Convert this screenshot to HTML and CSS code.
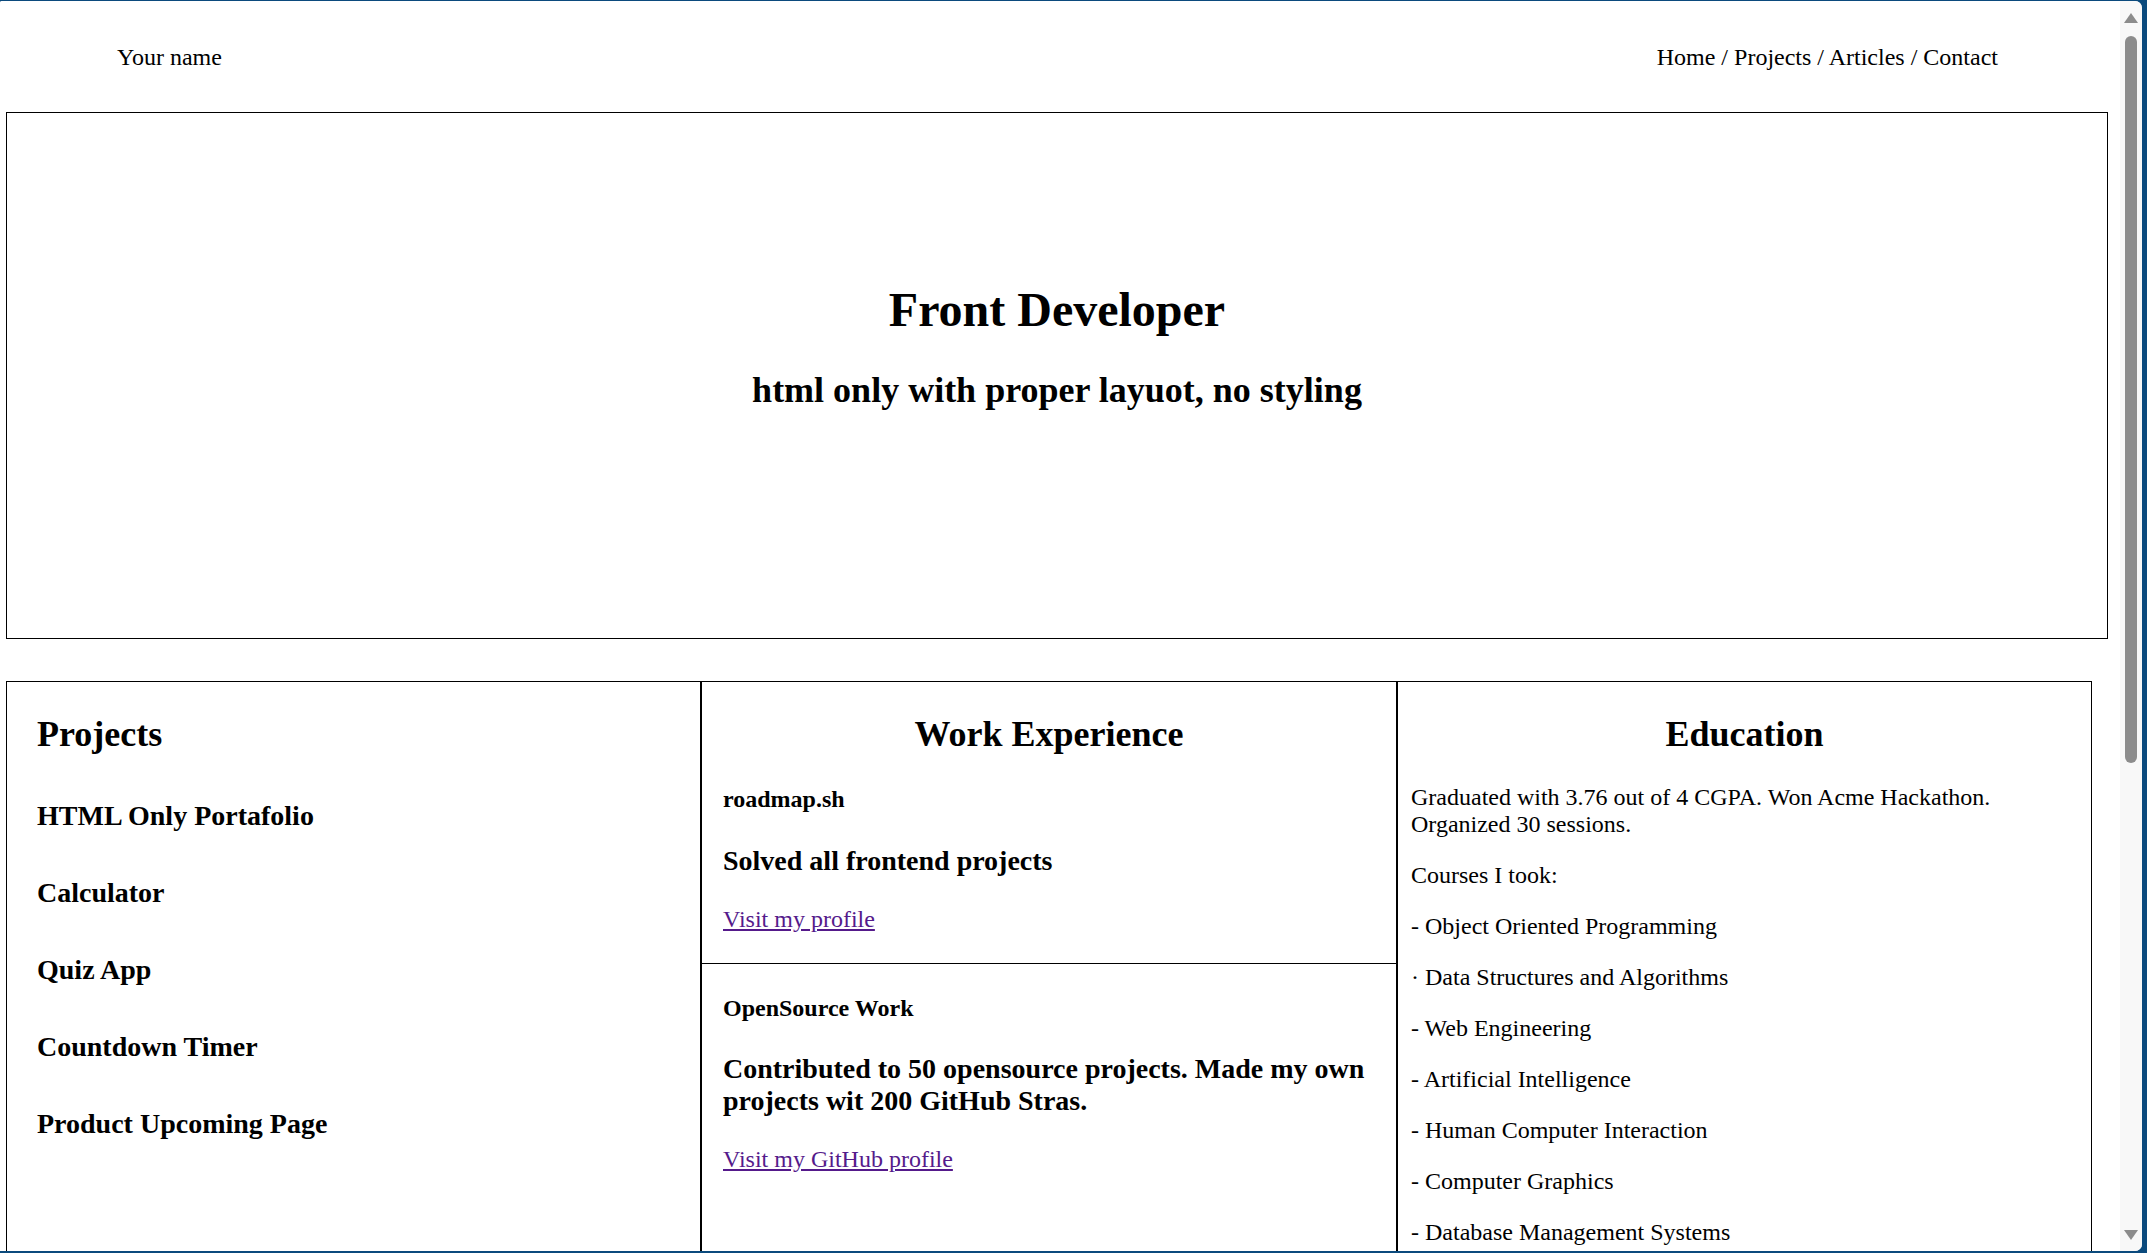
FILE: index.html
```html
<!DOCTYPE html>
<html lang="en">
<head>
<meta charset="utf-8">
<title>Your name</title>
<link rel="stylesheet" href="styles.css">
</head>
<body>
<div class="window">
  <div class="page">
    <header class="site-header">
      <div class="brand">Your name</div>
      <nav class="nav">Home / Projects / Articles / Contact</nav>
    </header>

    <section class="hero">
      <h1 class="hero-title">Front Developer</h1>
      <h2 class="hero-sub">html only with proper layuot, no styling</h2>
    </section>

    <main class="cols">
      <section class="col col-projects">
        <h2 class="col-title">Projects</h2>
        <h3 class="project">HTML Only Portafolio</h3>
        <h3 class="project">Calculator</h3>
        <h3 class="project">Quiz App</h3>
        <h3 class="project">Countdown Timer</h3>
        <h3 class="project">Product Upcoming Page</h3>
      </section>

      <section class="col col-work">
        <h2 class="col-title center">Work Experience</h2>
        <article class="job job-first">
          <h4 class="job-org">roadmap.sh</h4>
          <h3 class="job-desc">Solved all frontend projects</h3>
          <p class="job-link"><a href="#">Visit my profile</a></p>
        </article>
        <article class="job job-second">
          <h4 class="job-org">OpenSource Work</h4>
          <h3 class="job-desc">Contributed to 50 opensource projects. Made my own projects wit 200 GitHub Stras.</h3>
          <p class="job-link"><a href="#">Visit my GitHub profile</a></p>
        </article>
      </section>

      <section class="col col-edu">
        <h2 class="col-title center">Education</h2>
        <p class="edu-text edu-first">Graduated with 3.76 out of 4 CGPA. Won Acme Hackathon. Organized 30 sessions.</p>
        <p class="edu-text">Courses I took:</p>
        <p class="edu-text">- Object Oriented Programming</p>
        <p class="edu-text">· Data Structures and Algorithms</p>
        <p class="edu-text">- Web Engineering</p>
        <p class="edu-text">- Artificial Intelligence</p>
        <p class="edu-text">- Human Computer Interaction</p>
        <p class="edu-text">- Computer Graphics</p>
        <p class="edu-text">- Database Management Systems</p>
      </section>
    </main>
  </div>

  <div class="scrollbar">
    <div class="sb-up"></div>
    <div class="sb-thumb"></div>
    <div class="sb-down"></div>
  </div>
</div>
</body>
</html>
```

FILE: styles.css
```css
html, body {
  margin: 0;
  padding: 0;
}

body {
  background: #0b4a7d;
  height: 1253px;
  overflow: hidden;
  font-family: "Liberation Serif", "Times New Roman", serif;
  color: #000;
}

.window {
  margin-top: 1px;
  width: 2142px;
  height: 1250px;
  display: flex;
  background: #fff;
  border-radius: 2px 7px 7px 0;
  overflow: hidden;
}

.page {
  flex: 1;
  min-width: 0;
  overflow: hidden;
  background: #fff;
}

/* header */
.site-header {
  box-sizing: border-box;
  height: 111px;
  padding: 41.5px 122px 0 117px;
  display: flex;
  justify-content: space-between;
  align-items: flex-start;
  font-size: 24px;
  line-height: 28px;
}

/* hero */
.hero {
  box-sizing: border-box;
  margin-left: 6px;
  width: 2102px;
  height: 527px;
  border: 1px solid #000;
  padding-top: 168.5px;
  text-align: center;
}

.hero-title {
  margin: 0;
  font-size: 48px;
  line-height: 55px;
  font-weight: bold;
}

.hero-sub {
  margin: 33.5px 0 0;
  font-size: 36px;
  line-height: 41px;
  font-weight: bold;
}

/* columns */
.cols {
  display: flex;
  align-items: stretch;
  margin: 42px 0 0 6px;
}

.col {
  box-sizing: border-box;
  border: 1px solid #000;
}

.col-projects {
  width: 695px;
  padding: 0 20px 0 30px;
}

.col-work {
  width: 696px;
}

.col-edu {
  width: 695px;
  padding: 0 13px 60px 13px;
}

.col-title {
  margin: 31.5px 0 0;
  font-size: 36px;
  line-height: 41px;
  font-weight: bold;
}

.center {
  text-align: center;
}

.project {
  margin: 45px 0 0;
  font-size: 28px;
  line-height: 32px;
  font-weight: bold;
}

/* work */
.job {
  padding: 0 21px 0 21px;
}

.job-first {
  padding-bottom: 30.5px;
  border-bottom: 1px solid #000;
}

.job-org {
  margin: 29.5px 0 0;
  font-size: 24px;
  line-height: 28px;
  font-weight: bold;
}

.job-first .job-org {
  margin-top: 30.5px;
}

.job-desc {
  margin: 31.5px 0 0;
  font-size: 28px;
  line-height: 32px;
  font-weight: bold;
}

.job-link {
  margin: 28px 0 0;
  font-size: 24px;
  line-height: 28px;
}

.job-link a {
  color: #551a8b;
  text-decoration: underline;
}

/* education */
.edu-text {
  margin: 24px 0 0;
  font-size: 24px;
  line-height: 27px;
}

.edu-first {
  margin-top: 29.5px;
}

/* fake scrollbar */
.scrollbar {
  width: 22px;
  flex: none;
  background: #f8f8f8;
  display: flex;
  flex-direction: column;
  align-items: center;
  padding: 12px 0 11px;
  box-sizing: border-box;
}

.sb-up {
  width: 0;
  height: 0;
  border-left: 7px solid transparent;
  border-right: 7px solid transparent;
  border-bottom: 10px solid #8c8c8c;
}

.sb-thumb {
  margin-top: 13px;
  width: 12px;
  height: 727px;
  border-radius: 6px;
  background: #8c8c8c;
}

.sb-down {
  margin-top: auto;
  width: 0;
  height: 0;
  border-left: 7px solid transparent;
  border-right: 7px solid transparent;
  border-top: 10px solid #8c8c8c;
}
```
